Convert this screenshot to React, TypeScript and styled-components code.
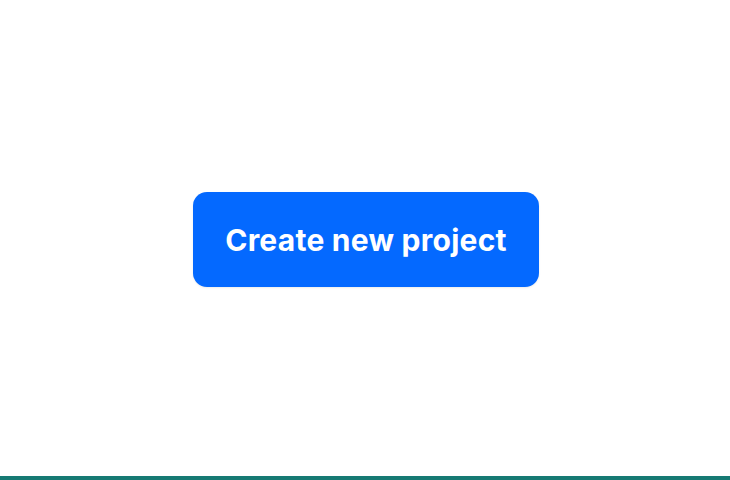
import React from "react";
import styled, { createGlobalStyle } from "styled-components";

const GlobalStyle = createGlobalStyle`
    html, body {
        margin: 0;
        padding: 0;
        background: #ffffff;
    }
    #root {
        height: 100vh;
    }
`;

const Page = styled.div`
    display: flex;
    flex-direction: column;
    height: 100vh;
    font-family: 'Inter', 'Liberation Sans', sans-serif;
`;

const Main = styled.main`
    flex: 1;
    display: flex;
    align-items: center;
    justify-content: center;
`;

const PrimaryButton = styled.button`
    width: 346px;
    height: 95px;
    margin: 3px 0 0 2px;
    border: none;
    border-radius: 14px;
    background-color: #0469ff;
    color: #ffffff;
    font-family: inherit;
    font-size: 30px;
    font-weight: 700;
    letter-spacing: 0.25px;
    padding: 0;
    cursor: pointer;
    box-shadow: 0 1px 2px rgba(0, 0, 0, 0.08);
`;

const BottomBar = styled.div`
    height: 4px;
    background-color: #167a73;
`;

const App: React.FC = () => {
    return (
        <Page>
            <GlobalStyle />
            <Main>
                <PrimaryButton>Create new project</PrimaryButton>
            </Main>
            <BottomBar />
        </Page>
    );
};

export default App;
